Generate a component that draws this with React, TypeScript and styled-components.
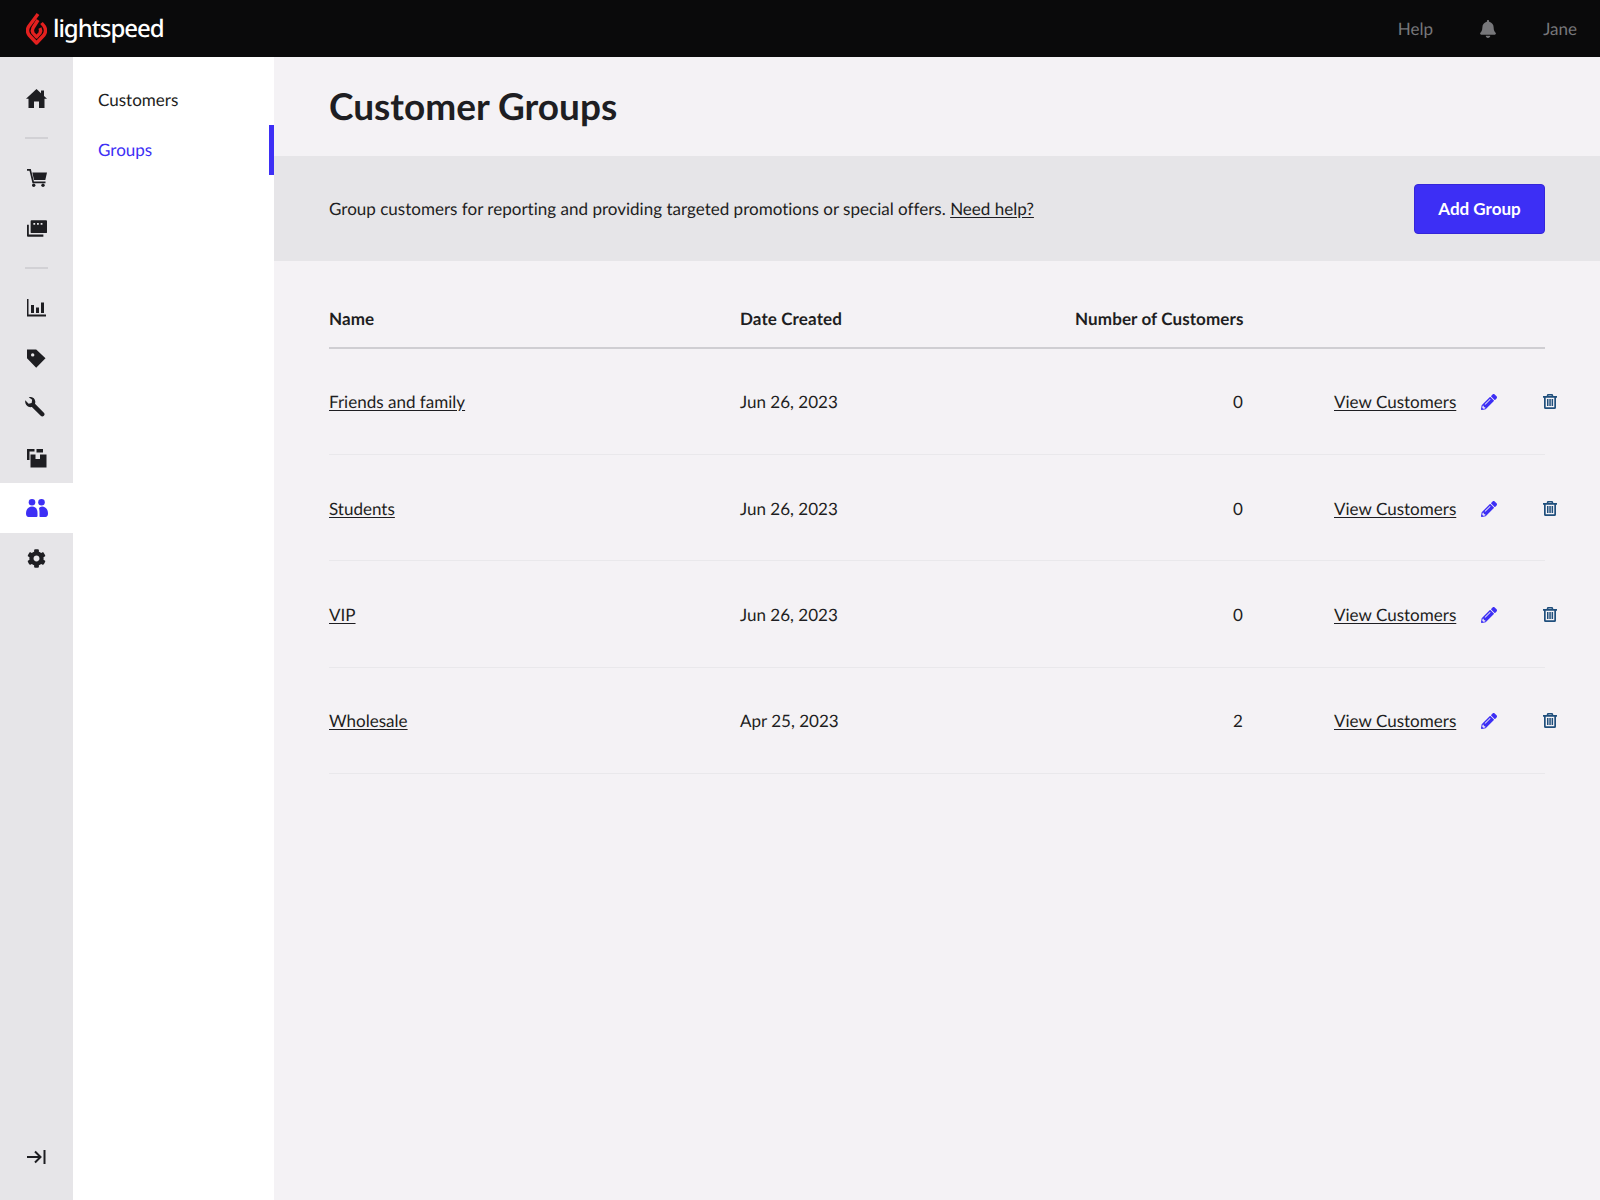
import React from "react";
import styled, { createGlobalStyle } from "styled-components";
import { FaCog, FaBell, FaPencilAlt } from "react-icons/fa";

const GlobalStyle = createGlobalStyle`
  html, body {
    margin: 0;
    padding: 0;
    background: #f4f2f5;
  }
  * {
    box-sizing: border-box;
  }
  body {
    font-family: Lato, "Liberation Sans", sans-serif;
    font-size: 17.05px;
    color: #1e1e22;
    text-rendering: geometricPrecision;
    font-variant-ligatures: none;
  }
`;

const Page = styled.div`
  display: flex;
  flex-flow: column;
  height: 1200px;
  overflow: hidden;
`;

const TopBar = styled.header`
  height: 57px;
  flex: none;
  background: #0a0a0b;
  display: flex;
  align-items: center;
  justify-content: space-between;
  padding: 0 23px 0 26px;
`;

const Logo = styled.div`
  display: flex;
  align-items: center;
  gap: 6px;
`;

const LogoText = styled.span`
  font-family: "Noto Sans", sans-serif;
  font-size: 24px;
  font-weight: 500;
  letter-spacing: -1.05px;
  color: #fff;
  line-height: 1;
`;

const TopActions = styled.div`
  display: flex;
  align-items: center;
  gap: 46px;
  color: #77777a;
`;

const Body = styled.div`
  flex: 1;
  display: flex;
  min-height: 0;
`;

const Rail = styled.nav`
  width: 73px;
  flex: none;
  background: #e6e5e8;
  padding-top: 16px;
  display: flex;
  flex-flow: column;
`;

const RailItem = styled.div<{ $active?: boolean }>`
  height: 50px;
  flex: none;
  display: flex;
  align-items: center;
  justify-content: center;
  background: ${(p) => (p.$active ? "#fff" : "transparent")};
  color: ${(p) => (p.$active ? "#3d2ff5" : "#1e1e22")};
`;

const RailDivider = styled.div`
  height: 2px;
  width: 23px;
  flex: none;
  margin: 14px 0 14px 25px;
  background: #d2d1d5;
`;

const RailBottom = styled(RailItem)`
  margin-top: auto;
  margin-bottom: 18px;
`;

const SubNav = styled.nav`
  width: 200.5px;
  flex: none;
  background: #fff;
  padding-top: 18px;
`;

const SubNavItem = styled.div<{ $active?: boolean }>`
  height: 50px;
  display: flex;
  align-items: center;
  padding: 0 0 1px 25px;
  color: ${(p) => (p.$active ? "#3d2ff5" : "#1e1e22")};
  border-right: 5px solid ${(p) => (p.$active ? "#3d2ff5" : "transparent")};
`;

const Main = styled.main`
  flex: 1;
  min-width: 0;
`;

const PageTitle = styled.h1`
  margin: 0;
  height: 99px;
  display: flex;
  align-items: center;
  padding: 0 0 2px 55.5px;
  font-size: 37px;
  font-weight: 700;
  color: #1e1e22;
`;

const Banner = styled.section`
  height: 105px;
  background: #e6e5e8;
  display: flex;
  align-items: center;
  justify-content: space-between;
  padding: 0 55px 0 55.5px;
`;

const TextLink = styled.a`
  color: #1e1e22;
  text-decoration: underline;
  text-underline-offset: 2px;
  white-space: nowrap;
`;

const PrimaryButton = styled.button`
  width: 131px;
  height: 50px;
  background: #3d2ff5;
  border: 1px solid #3526d8;
  border-radius: 4px;
  color: #fff;
  font-family: inherit;
  font-size: 17.05px;
  font-weight: 700;
`;

const Table = styled.div`
  margin: 0 55px 0 55.5px;
`;

const Row = styled.div`
  display: grid;
  grid-template-columns: 411px 335px 168px 1fr;
  align-items: center;
  height: 106.2px;
  padding-top: 0.6px;
  border-bottom: 1px solid #e9e8eb;
`;

const HeaderRow = styled(Row)`
  height: 88px;
  align-items: end;
  padding: 0 0 18px;
  font-weight: 700;
  letter-spacing: 0.1px;
  border-bottom: 2px solid #cfced2;
`;

const NumberCell = styled.div`
  text-align: right;
  white-space: nowrap;
`;

const Actions = styled.div`
  display: flex;
  align-items: center;
  padding-left: 91px;
`;

const EditIcon = styled.span`
  display: flex;
  flex: none;
  margin: 1px 0 0 25px;
  color: #3d2ff5;
`;

const DeleteIcon = styled.span`
  display: flex;
  flex: none;
  margin-left: 46px;
  color: #1f4f7c;
`;

const WrenchSlot = styled.span`
  display: flex;
  margin: -2px 4px 0 0;
`;

const FlameLogo = () => (
  <svg width="21" height="33" viewBox="0 0 21 33" fill="none" stroke="#e3201f" strokeWidth="3.4" strokeLinejoin="round">
    <path d="M12 2 L3 14 C1 17 1 20 3 23 L10.5 31 L18 23 C20 20 20 17 18 14 L15.5 11" />
    <path d="M12 8 L7 16 C6 18 6 19 7 21 L10.5 25 L14 21 C15 19 15 18 14 16" />
  </svg>
);

const HomeIcon = () => (
  <svg width="21" height="19" viewBox="0 0 21 19" fill="currentColor">
    <path d="M10.500 0 L15 4.200 V1.500 H18 V7 L21 9.800 H18.500 V19 H13 V12.500 H8 V19 H2.500 V9.800 H0 Z" />
  </svg>
);

const CartIcon = () => (
  <svg width="20" height="18" viewBox="0 0 20 18" fill="currentColor">
    <path d="M0 0h3.800l3.100 12.500H18.500v1.700H5.500L2.500 1.700H0z" />
    <path d="M5.300 3.500H20l-1.700 7.500H7z" />
    <circle cx="6.700" cy="16.300" r="1.700" />
    <circle cx="16" cy="16.300" r="1.700" />
  </svg>
);

const CatalogIcon = () => (
  <svg width="20" height="17" viewBox="0 0 22 18" fill="currentColor">
    <path d="M5 0h16a1 1 0 0 1 1 1v12a1 1 0 0 1-1 1H5a1 1 0 0 1-1-1V1a1 1 0 0 1 1-1zm2 3v2h2V3H7zm4 0v2h2V3h-2zm4 0v2h2V3h-2z" fillRule="evenodd" />
    <path d="M0 5h2v10.500h16V18H1a1 1 0 0 1-1-1V5z" />
  </svg>
);

const ChartIcon = () => (
  <svg width="19" height="18" viewBox="0 0 19 18" fill="currentColor">
    <path d="M0 0h1.500v15.500H19V17.500H0z" />
    <rect x="4" y="6" width="3" height="8" />
    <rect x="9" y="8.500" width="3" height="5.500" />
    <rect x="14" y="3.500" width="3" height="10.500" />
  </svg>
);

const TagIcon = () => (
  <svg width="19" height="19" viewBox="0 0 19 19" fill="currentColor">
    <path d="M0 0.500H9.200L18.500 9.300L9.200 18.700L0 9.300ZM5.700 4.200a1.700 1.700 0 1 0 0 3.400 1.700 1.700 0 0 0 0-3.400z" fillRule="evenodd" />
  </svg>
);

const WrenchIcon = () => (
  <svg width="20" height="20" viewBox="0 0 21 21" fill="currentColor">
    <path d="M0.300 3.500 L3.800 7 L7 6.300 L7.500 3 L4 0.300 C7 -0.800 10.500 1 10.800 4.800 C10.900 5.800 10.700 6.500 10.500 7.200 L19.800 16.500 C20.800 17.500 20.800 18.800 19.800 19.800 C18.800 20.800 17.500 20.800 16.500 19.800 L7.200 10.500 C3.500 11.500 -0.500 8 0.300 3.500 Z" />
  </svg>
);

const BoxesIcon = () => (
  <svg width="20" height="19" viewBox="0 0 20 19" fill="currentColor">
    <path d="M0 0h7.500v2.500H2.500V11H0z" />
    <path d="M9.500 0H16v3.500H9.500z" />
    <path d="M3.500 5.500H8.500V10H13V5.500H19.500V18.500H3.500z" />
  </svg>
);

const UsersIcon = () => (
  <svg width="22" height="18" viewBox="0 0 22 18" fill="currentColor">
    <circle cx="6" cy="3.300" r="3.300" />
    <circle cx="15.500" cy="3.300" r="3.300" />
    <path d="M0 14.500C0 10.500 2.500 7.500 6 7.500s5.500 2.500 5.500 6V17a1 1 0 0 1-1 1H2.500C1 18 0 16.500 0 14.500z" />
    <path d="M13 9a5 5 0 0 1 3-1.500c3.500 0 6 3 6 7 0 2-1 3.500-2.500 3.500H14a1 1 0 0 1-.5-.5V13c0-1.500-.2-2.800-.5-4z" />
  </svg>
);

const CollapseIcon = () => (
  <svg width="19" height="14" viewBox="0 0 19 14" fill="none" stroke="currentColor" strokeWidth="2">
    <path d="M0 7h13M8 1.500L13.500 7 8 12.500" />
    <path d="M17.500 0v14" />
  </svg>
);

const TrashIcon = () => (
  <svg width="14" height="15" viewBox="0 0 14 15" fill="currentColor">
    <path d="M5 0h4a1 1 0 0 1 1 .7L10.300 2H14v1.700h-1V13.500A1.500 1.500 0 0 1 11.500 15h-9A1.500 1.500 0 0 1 1 13.500V3.700H0V2h3.700L4 .7A1 1 0 0 1 5 0zM2.700 3.700v9.600h8.600V3.700zM5.300 2h3.400l-.2-.6h-3z" fillRule="evenodd" />
    <rect x="4" y="5" width="1.500" height="7" />
    <rect x="6.300" y="5" width="1.500" height="7" />
    <rect x="8.600" y="5" width="1.500" height="7" />
  </svg>
);

type TGroup = {
  name: string;
  created: string;
  count: number;
};

const groups: TGroup[] = [
  { name: "Friends and family", created: "Jun 26, 2023", count: 0 },
  { name: "Students", created: "Jun 26, 2023", count: 0 },
  { name: "VIP", created: "Jun 26, 2023", count: 0 },
  { name: "Wholesale", created: "Apr 25, 2023", count: 2 },
];

const App = () => {
  return (
    <Page>
      <GlobalStyle />
      <TopBar>
        <Logo>
          <FlameLogo />
          <LogoText>lightspeed</LogoText>
        </Logo>
        <TopActions>
          <span>Help</span>
          <FaBell size={18} />
          <span>Jane</span>
        </TopActions>
      </TopBar>
      <Body>
        <Rail>
          <RailItem><HomeIcon /></RailItem>
          <RailDivider />
          <RailItem><CartIcon /></RailItem>
          <RailItem><CatalogIcon /></RailItem>
          <RailDivider />
          <RailItem><ChartIcon /></RailItem>
          <RailItem><TagIcon /></RailItem>
          <RailItem><WrenchSlot><WrenchIcon /></WrenchSlot></RailItem>
          <RailItem><BoxesIcon /></RailItem>
          <RailItem $active><UsersIcon /></RailItem>
          <RailItem><FaCog size={19} /></RailItem>
          <RailBottom><CollapseIcon /></RailBottom>
        </Rail>
        <SubNav>
          <SubNavItem>Customers</SubNavItem>
          <SubNavItem $active>Groups</SubNavItem>
        </SubNav>
        <Main>
          <PageTitle>Customer Groups</PageTitle>
          <Banner>
            <span>
              Group customers for reporting and providing targeted promotions or special offers.{" "}
              <TextLink>Need help?</TextLink>
            </span>
            <PrimaryButton>Add Group</PrimaryButton>
          </Banner>
          <Table>
            <HeaderRow>
              <div>Name</div>
              <div>Date Created</div>
              <NumberCell>Number of Customers</NumberCell>
            </HeaderRow>
            {groups.map((group) => (
              <Row key={group.name}>
                <div><TextLink>{group.name}</TextLink></div>
                <div>{group.created}</div>
                <NumberCell>{group.count}</NumberCell>
                <Actions>
                  <TextLink>View Customers</TextLink>
                  <EditIcon><FaPencilAlt size={16} /></EditIcon>
                  <DeleteIcon><TrashIcon /></DeleteIcon>
                </Actions>
              </Row>
            ))}
          </Table>
        </Main>
      </Body>
    </Page>
  );
};

export default App;
